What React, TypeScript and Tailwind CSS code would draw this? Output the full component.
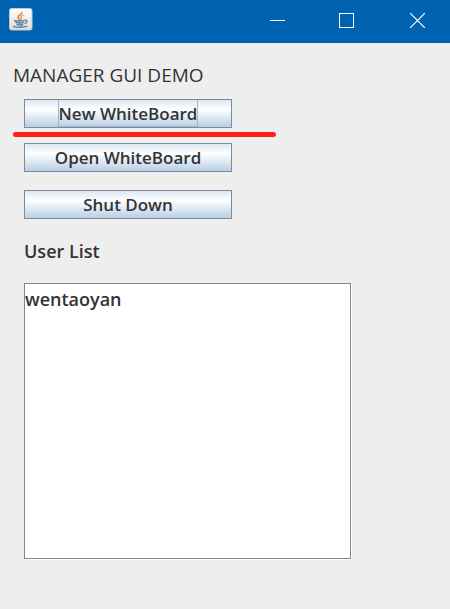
import React, { useState } from "react";

const buttonStyle =
  "flex h-[29px] w-full items-center justify-center border border-[#7a8a99] bg-linear-to-b from-[#dce7f2] via-white via-35% to-[#b8cfe5] text-[17px] leading-none font-semibold text-[#333333]";

function JavaIcon() {
  return (
    <svg width="24" height="24" viewBox="0 0 24 24" fill="none" aria-hidden="true">
      <defs>
        <linearGradient id="tile" x1="0" y1="0" x2="0" y2="1">
          <stop offset="0" stopColor="#ffffff" />
          <stop offset="1" stopColor="#dcdcdc" />
        </linearGradient>
      </defs>
      <rect x="0.5" y="0.5" width="22.5" height="21.5" rx="2" fill="url(#tile)" stroke="#c5c8ca" />
      <path d="M12.8 4c1 2-3.8 3.2-3.8 5.200 0 1.300 1.500 2 1.800 3" stroke="#ee8434" strokeWidth="1.700" />
      <path d="M14.500 7c-2.200.8-3.200 1.800-2.500 2.800.6.8.4 1.700-.3 2.200" stroke="#ee8434" strokeWidth="1.300" />
      <path d="M5 12.300c1.800 1 8.500 1 10.500 0M6.500 14.300c1.800.9 6.500.9 8.500 0M7.500 16.300c1.800.8 5 .8 6.700 0" stroke="#527b9d" strokeWidth="1.400" />
      <path d="M15.500 12.300c3-.8 3.300 2.300 0 3.300" stroke="#527b9d" strokeWidth="1.300" />
      <path d="M4.500 17.800c-1 1.800 11 1.800 13.500.2" stroke="#527b9d" strokeWidth="1.400" />
    </svg>
  );
}

function TitleBar() {
  return (
    <header className="flex h-[43px] items-start justify-between bg-[#0063b1] pl-[9px]">
      <div className="pt-2">
        <JavaIcon />
      </div>
      <div className="flex text-white">
        <button type="button" aria-label="Minimize" className="flex h-10 w-[69px] items-center justify-center">
          <svg width="15" height="15" viewBox="0 0 15 15" stroke="currentColor" shapeRendering="crispEdges">
            <path d="M0 7.500h15" />
          </svg>
        </button>
        <button type="button" aria-label="Maximize" className="flex h-10 w-[69px] items-center justify-center">
          <svg width="15" height="15" viewBox="0 0 15 15" fill="none" stroke="currentColor" shapeRendering="crispEdges">
            <rect x="0.5" y="0.5" width="14" height="14" />
          </svg>
        </button>
        <button type="button" aria-label="Close" className="ml-1 flex h-10 w-[65px] items-center justify-center">
          <svg width="15" height="15" viewBox="0 0 15 15" stroke="currentColor" strokeWidth="1.200">
            <path d="M0 0l15 15M15 0L0 15" />
          </svg>
        </button>
      </div>
    </header>
  );
}

export default function App() {
  const [users] = useState(["wentaoyan"]);

  return (
    <div className="flex min-h-screen flex-col bg-[#eeeeee] font-['Comic_Sans_MS','Open_Sans',sans-serif] text-[#333333]">
      <TitleBar />
      <main className="px-6 pt-5 pb-12">
        <h1 className="-ml-[11px] text-[19px] leading-6 whitespace-nowrap">MANAGER GUI DEMO</h1>
        <div className="mt-3 w-52">
          <button type="button" className={buttonStyle}>
            <span className="flex h-full items-center border-x border-b border-[#a3b8cc]">New WhiteBoard</span>
          </button>
        </div>
        <div className="mt-1 -ml-[11px] h-[5px] w-[263px] rounded-full bg-[#ff2010]" />
        <div className="mt-[6px] flex w-52 flex-col gap-[18px]">
          <button type="button" className={buttonStyle}>Open WhiteBoard</button>
          <button type="button" className={buttonStyle}>Shut Down</button>
        </div>
        <h2 id="user-list" className="mt-5 text-lg leading-6 font-semibold">User List</h2>
        <ul
          aria-labelledby="user-list"
          className="mt-5 min-h-[276px] w-full max-w-[327px] border border-[#7a8a99] bg-white pt-[3px] text-lg leading-6 font-semibold shadow-[1px_1px_0_white]"
        >
          {users.map((user) => (
            <li key={user}>{user}</li>
          ))}
        </ul>
      </main>
    </div>
  );
}
